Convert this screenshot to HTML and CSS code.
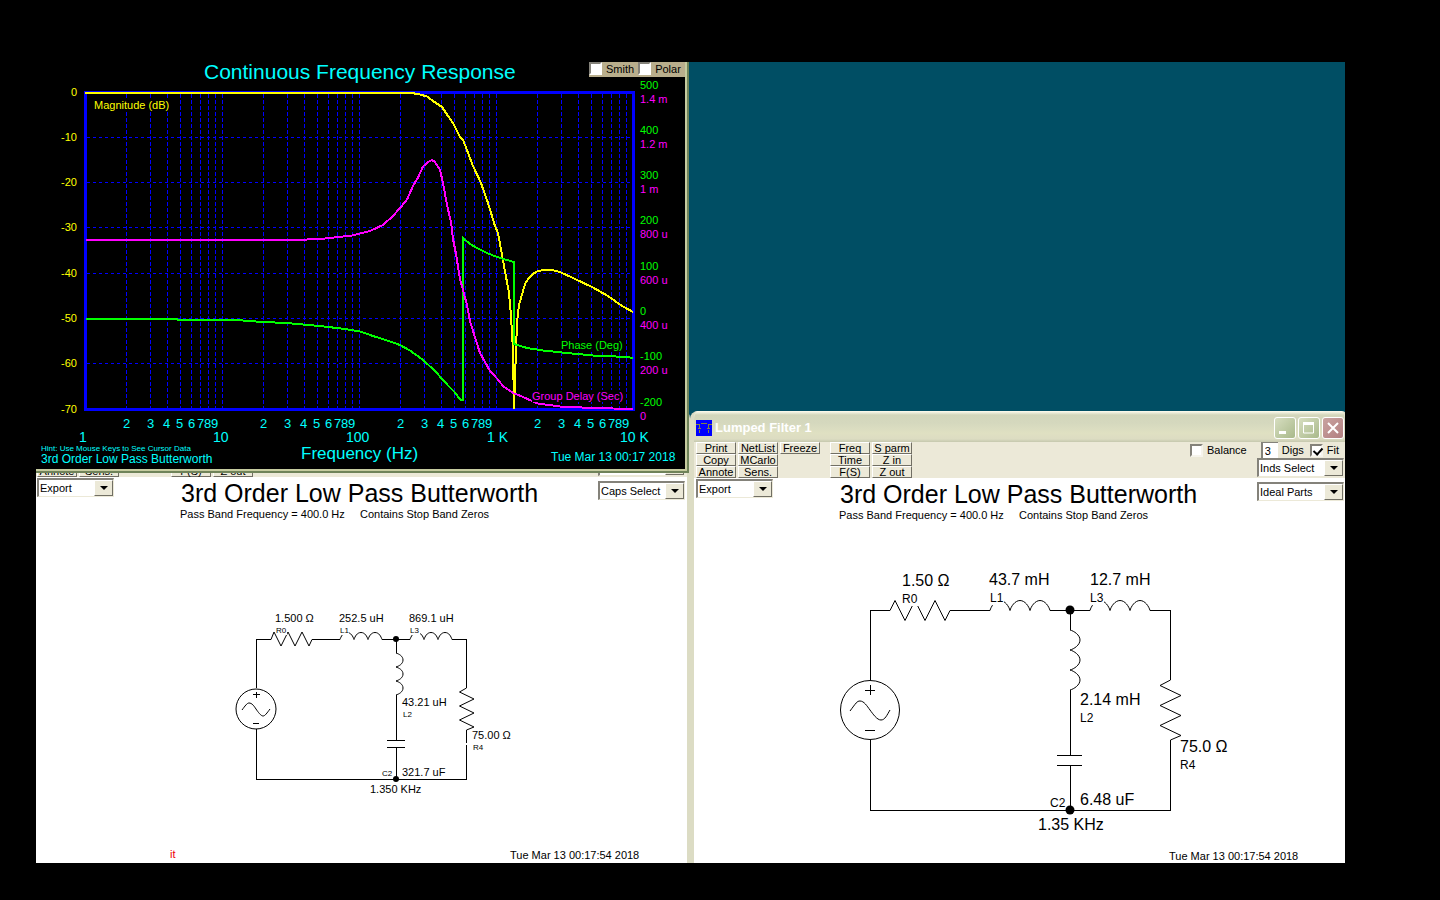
FILE: index.html
```
<!DOCTYPE html>
<html lang="en">
<head>
<meta charset="utf-8">
<title>Lumped Filter 1</title>
<link rel="stylesheet" href="styles.css">
</head>
<body>
<main class="desktop">

  <section class="window window-left" aria-label="Lumped Filter">
    <header class="titlebar"></header>
    <div class="client">
      <div class="toolbar">
        <div class="button-grid">
          <button class="c1">Print</button><button class="c2">NetList</button><button class="c3">Freeze</button><button class="c4">Freq</button><button class="c5">S parm</button>
          <button class="c1">Copy</button><button class="c2">MCarlo</button><button class="c4">Time</button><button class="c5">Z in</button>
          <button class="c1">Annote</button><button class="c2">Sens.</button><button class="c4">F(S)</button><button class="c5">Z out</button>
        </div>
        <div class="combo combo-inds"><select aria-label="Inductors"><option>Inds Select</option></select></div>
      </div>
      <div class="sheet">
        <div class="combo combo-export"><select aria-label="Export"><option>Export</option></select></div>
        <div class="combo combo-parts"><select aria-label="Capacitors"><option>Caps Select</option></select></div>
        <svg class="schematic" viewBox="35 477 652 387">
          <text class="t25" x="181" y="502">3rd Order Low Pass Butterworth</text>
          <text class="t11" x="180" y="518">Pass Band Frequency = 400.0 Hz</text>
          <text class="t11" x="360" y="518">Contains Stop Band Zeros</text>
          <g class="wire crisp">
            <path d="M256.5 688V639.5H271M312 639.5H340M382 639.5H410M452 639.5H466.5V688M466.5 730V743M466.5 745V779.5H256.5V729M396.5 639V653M396.5 695V740M387 740.5H405M387 747.5H405M396.5 748V779M253 694.5H260M256.5 692V698M253 723.5H259"/>
          </g>
          <g class="wire">
            <path d="M271 639.5L274 632L281 646L288 632L295 646L302 632L309 646L312 639.5M466.5 688L459.5 692L474 699L459.5 706L474 713L459.5 720L474 727L466.5 730"/>
            <path d="M340 639.5c1-3 3-7 7-7s6 4 7 7c1-3 3-7 7-7s6 4 7 7c1-3 3-7 7-7s6 4 7 7M410 639.5c1-3 3-7 7-7s6 4 7 7c1-3 3-7 7-7s6 4 7 7c1-3 3-7 7-7s6 4 7 7M396 653c3 1 7 3 7 7s-4 6-7 7c3 1 7 3 7 7s-4 6-7 7c3 1 7 3 7 7s-4 6-7 7"/>
            <circle cx="256" cy="709" r="20"/>
            <path d="M242 710C245 706 247 703 249 703C252 703 254 706 256 709S261 716 263 716S267 713 270 709"/>
          </g>
          <circle cx="396" cy="639" r="3"/><circle cx="396" cy="779" r="3"/>
          <rect class="paper" x="277" y="626" width="10" height="9"/><rect class="paper" x="341" y="626" width="8" height="9"/><rect class="paper" x="411" y="626" width="9" height="9"/>
          <text class="t11" x="275" y="622">1.500 Ω</text><text class="t8" x="276" y="633">R0</text>
          <text class="t11" x="339" y="622">252.5 uH</text><text class="t8" x="340" y="633">L1</text>
          <text class="t11" x="409" y="622">869.1 uH</text><text class="t8" x="410" y="633">L3</text>
          <text class="t11" x="402" y="706">43.21 uH</text><text class="t8" x="403" y="717">L2</text>
          <text class="t11" x="472" y="739">75.00 Ω</text><text class="t8" x="473" y="750">R4</text>
          <text class="t8" x="382" y="776">C2</text><text class="t11" x="402" y="776">321.7 uF</text>
          <text class="t11" x="370" y="793">1.350 KHz</text>
          <text class="t11 red" x="170" y="858">it</text>
          <text class="t11" x="510" y="859">Tue Mar 13 00:17:54 2018</text>
        </svg>
      </div>
    </div>
  </section>

  <section class="window window-right" aria-label="Lumped Filter 1">
    <header class="titlebar">
      <svg class="app-icon" viewBox="0 0 16 16"><rect width="16" height="16" fill="#0000ff"/><path d="M0 4.5H4M5 3.500H11M12 4.500H16M3.500 5V8M12.500 5V8M3.500 10V13M12.500 10V13M2 8.500H5M11 8.500H14" fill="none" stroke="#85853e" shape-rendering="crispEdges"/></svg>
      <h1>Lumped Filter 1</h1>
      <button class="caption-button" aria-label="Minimize"><svg viewBox="0 0 20 20"><path d="M4 14.500H11" stroke="#fff" stroke-width="3"/></svg></button>
      <button class="caption-button" aria-label="Maximize"><svg viewBox="0 0 20 20"><path d="M4.500 5.500H14.500V15H4.500Z" fill="none" stroke="#fff"/><path d="M4 5.500H15" stroke="#fff" stroke-width="3"/></svg></button>
      <button class="caption-button close" aria-label="Close"><svg viewBox="0 0 20 20"><path d="M5 5L15 15M15 5L5 15" stroke="#fff" stroke-width="2"/></svg></button>
    </header>
    <div class="client">
      <div class="toolbar">
        <div class="button-grid">
          <button class="c1">Print</button><button class="c2">NetList</button><button class="c3">Freeze</button><button class="c4">Freq</button><button class="c5">S parm</button>
          <button class="c1">Copy</button><button class="c2">MCarlo</button><button class="c4">Time</button><button class="c5">Z in</button>
          <button class="c1">Annote</button><button class="c2">Sens.</button><button class="c4">F(S)</button><button class="c5">Z out</button>
        </div>
        <div class="options">
          <label class="balance"><input type="checkbox"> Balance</label>
          <label class="digits"><input type="text" value="3"> Digs</label>
          <label><input type="checkbox" checked> Fit</label>
        </div>
        <div class="combo combo-inds"><select aria-label="Inductors"><option>Inds Select</option></select></div>
      </div>
      <div class="sheet">
        <div class="combo combo-export"><select aria-label="Export"><option>Export</option></select></div>
        <div class="combo combo-parts"><select aria-label="Parts"><option>Ideal Parts</option></select></div>
        <svg class="schematic" viewBox="694 478 651 387">
          <text class="t25" x="840" y="503">3rd Order Low Pass Butterworth</text>
          <text class="t11" x="839" y="519">Pass Band Frequency = 400.0 Hz</text>
          <text class="t11" x="1019" y="519">Contains Stop Band Zeros</text>
          <g class="wire crisp">
            <path d="M870.5 680V610.5H890M950 610.5H990M1050 610.5H1090M1150 610.5H1170.500V680M1170.500 740V810.5H870.5V740M1070.500 610V630M1070.500 690V755M1057 755.500H1082M1057 765.500H1082M1070.500 766V810M865 690.500H875M870.5 685V695M865 730.500H875"/>
          </g>
          <g class="wire">
            <path d="M890 610.5L895 600.5L905 620.5L915 600.5L925 620.5L935 600.5L945 620.5L950 610.5M1170.500 680L1160 685.500L1181 695.500L1160 705.500L1181 715.500L1160 725.500L1181 735.500L1170.500 740"/>
            <path d="M990 610.500c1-4 5-10 10-10s9 6 10 10c1-4 5-10 10-10s9 6 10 10c1-4 5-10 10-10s9 6 10 10M1090 610.500c1-4 5-10 10-10s9 6 10 10c1-4 5-10 10-10s9 6 10 10c1-4 5-10 10-10s9 6 10 10M1070 630c4 1 10 5 10 10s-6 9-10 10c4 1 10 5 10 10s-6 9-10 10c4 1 10 5 10 10s-6 9-10 10"/>
            <circle cx="870" cy="710" r="29.500"/>
            <path d="M850 711C856 703 857 701 860 701C864 701 867 706 870 710S877 720 881 720S887 715 890 710"/>
          </g>
          <circle cx="1070" cy="610" r="4.500"/><circle cx="1070" cy="810" r="4.500"/>
          <rect class="paper" x="902" y="593" width="16" height="13"/><rect class="paper" x="992" y="592" width="12" height="13"/><rect class="paper" x="1092" y="592" width="12" height="13"/>
          <text class="t16" x="902" y="586">1.50 Ω</text><text class="t12" x="902" y="603">R0</text>
          <text class="t16" x="989" y="585">43.7 mH</text><text class="t12" x="990" y="602">L1</text>
          <text class="t16" x="1090" y="585">12.7 mH</text><text class="t12" x="1090" y="602">L3</text>
          <text class="t16" x="1080" y="705">2.14 mH</text><text class="t12" x="1080" y="722">L2</text>
          <text class="t16" x="1180" y="752">75.0 Ω</text><text class="t12" x="1180" y="769">R4</text>
          <text class="t12" x="1050" y="807">C2</text><text class="t16" x="1080" y="805">6.48 uF</text>
          <text class="t16" x="1038" y="830">1.35 KHz</text>
          <text class="t11" x="1169" y="860">Tue Mar 13 00:17:54 2018</text>
        </svg>
      </div>
    </div>
  </section>

  <section class="chart-window" aria-label="Continuous Frequency Response">
    <div class="chart-options">
      <label><input type="checkbox"> Smith</label>
      <label><input type="checkbox"> Polar</label>
    </div>
    <svg class="chart" viewBox="36 62 649 407">
      <text class="t21 cyan" x="204" y="79">Continuous Frequency Response</text>
      <path class="grid grid-x" d="M126.500 94V408M150.500 94V408M167.500 94V408M180.500 94V408M191.500 94V408M200.500 94V408M208.500 94V408M215.500 94V408M222.500 94V408M263.500 94V408M287.500 94V408M304.500 94V408M317.500 94V408M328.500 94V408M337.500 94V408M345.500 94V408M352.500 94V408M359.500 94V408M400.500 94V408M424.500 94V408M441.500 94V408M454.500 94V408M465.500 94V408M474.500 94V408M482.500 94V408M489.500 94V408M496.500 94V408M537.500 94V408M561.500 94V408M578.500 94V408M591.500 94V408M602.500 94V408M611.500 94V408M619.500 94V408M626.500 94V408"/>
      <path class="grid grid-y" d="M87 137.500H632M87 182.500H632M87 227.500H632M87 273.500H632M87 318.500H632M87 363.500H632"/>
      <rect class="frame" x="85.500" y="92.500" width="548" height="317"/>
      <path class="curve yellow-line" d="M85 93H411L418 94L427 96.500L433 101L442 107L448 116L453 123L460 137L463 140L467 150L473 166L481 183L488 203L495 226L498 233L504 266L509 293L511 316L513 350L514 409L516 350L517 323L519 305L523 291L525 284L528 279L533 274L537 271.500L543 270H552L560 272L573 278L593 287.500L607 295.500L623 306.500L633 312"/>
      <path class="curve green-line" d="M86 319H175L180 320H236L263 322L286 323L320 326L345 329L360 331.500L373 336L387 340.500L400 345L410 350.500L423 360L435 371L448 385.500L455 392.500L460 399.500L463 400V238L470 244L477 248L487 253L497 257L507 260L514 262V344L527 348L543 350.500L567 353L593 355.500L627 357L633 358"/>
      <path class="curve magenta-line" d="M86 240H294L321 239L334 237.500L352 235.500L370 231L383 225L393 216L400 208L407 199.500L413 186L418 177.500L423 166.500L428 162L432 160L435 162L440 170L443 183L447 205L451 222L453 239L456 254L460 279L463 290L467 305L470 321L475 337.500L480 353L485 362L490 371L497 378.500L503 386L513 393L522 396.500L532 401L538 403.500L560 406.500L593 408L633 409"/>
      <rect class="mask" x="92" y="99" width="76" height="13"/><rect class="mask" x="561" y="339" width="63" height="12"/><rect class="mask" x="532" y="390" width="92" height="12"/>
      <text class="t11 yellow" x="94" y="109">Magnitude (dB)</text>
      <text class="t11 green" x="561" y="349">Phase (Deg)</text>
      <text class="t11 magenta" x="532" y="400">Group Delay (Sec)</text>
      <g class="t11 yellow end"><text x="77" y="96">0</text><text x="77" y="141">-10</text><text x="77" y="186">-20</text><text x="77" y="231">-30</text><text x="77" y="277">-40</text><text x="77" y="322">-50</text><text x="77" y="367">-60</text><text x="77" y="413">-70</text></g>
      <g class="t11 green"><text x="640" y="89">500</text><text x="640" y="134">400</text><text x="640" y="179">300</text><text x="640" y="224">200</text><text x="640" y="270">100</text><text x="640" y="315">0</text><text x="640" y="360">-100</text><text x="640" y="406">-200</text></g>
      <g class="t11 magenta"><text x="640" y="103">1.4 m</text><text x="640" y="148">1.2 m</text><text x="640" y="193">1 m</text><text x="640" y="238">800 u</text><text x="640" y="284">600 u</text><text x="640" y="329">400 u</text><text x="640" y="374">200 u</text><text x="640" y="420">0</text></g>
      <g class="t13 cyan">
        <text x="123" y="428">2</text><text x="147" y="428">3</text><text x="163" y="428">4</text><text x="176" y="428">5</text><text x="188" y="428">6</text><text x="197" y="428">7</text><text x="204" y="428">8</text><text x="211" y="428">9</text>
        <text x="260" y="428">2</text><text x="284" y="428">3</text><text x="300" y="428">4</text><text x="313" y="428">5</text><text x="325" y="428">6</text><text x="334" y="428">7</text><text x="341" y="428">8</text><text x="348" y="428">9</text>
        <text x="397" y="428">2</text><text x="421" y="428">3</text><text x="437" y="428">4</text><text x="450" y="428">5</text><text x="462" y="428">6</text><text x="471" y="428">7</text><text x="478" y="428">8</text><text x="485" y="428">9</text>
        <text x="534" y="428">2</text><text x="558" y="428">3</text><text x="574" y="428">4</text><text x="587" y="428">5</text><text x="599" y="428">6</text><text x="608" y="428">7</text><text x="615" y="428">8</text><text x="622" y="428">9</text>
      </g>
      <g class="t14 cyan"><text x="79" y="442">1</text><text x="213" y="442">10</text><text x="346" y="442">100</text><text x="487" y="442">1 K</text><text x="620" y="442">10 K</text></g>
      <text class="t8 cyan" x="41" y="451">Hint: Use Mouse Keys to See Cursor Data</text>
      <text class="t12 cyan" x="41" y="463">3rd Order Low Pass Butterworth</text>
      <text class="t17 cyan" x="301" y="459">Frequency (Hz)</text>
      <text class="t12 cyan" x="551" y="461">Tue Mar 13 00:17 2018</text>
    </svg>
  </section>
</main>
</body>
</html>
```
FILE: styles.css
```
* { box-sizing: border-box; }
body {
  margin: 0;
  min-height: 100vh;
  padding: 62px 95px 37px 36px;
  display: flex;
  background: #000;
  font: 11px/12px "Liberation Sans", Arial, sans-serif;
  color: #000;
}
.desktop {
  flex: 1;
  position: relative;
  overflow: hidden;
  background: #004e64;
}
button, input, select { font: inherit; color: inherit; margin: 0; }
svg { display: block; }

/* Windows on the desktop */
.window {
  position: absolute;
  bottom: -4px;
  border: solid #dcdcc4;
  border-width: 0 4px;
  border-radius: 8px 8px 0 0;
  background: #fff;
  overflow: hidden;
}
.window-left { top: 348px; left: -5px; right: 655px; border-right-width: 3px; }
.window-right { top: 349px; left: 654px; right: -4px; }

.titlebar {
  height: 31px;
  margin: 0 -4px;
  padding: 6px 5px 3px 6px;
  display: flex;
  align-items: center;
  background: linear-gradient(#fffdf0, #d3d6bb 4px, #d5d8be 12px, #dfe0c2 22px, #dcdcc2 28px, #c5c8ae);
}
.titlebar h1 {
  flex: 1;
  margin: 0 0 0 3px;
  font: bold 13px/16px "Liberation Sans", Arial, sans-serif;
  color: #fff;
}
.app-icon { width: 16px; height: 16px; }
.caption-button {
  width: 22px;
  height: 22px;
  margin-left: 2px;
  padding: 0;
  border: 1px solid #fff;
  border-radius: 3px;
  background: linear-gradient(135deg, #d7dec0, #a9b98b);
}
.caption-button.close { background: linear-gradient(135deg, #c9a3a0, #b27f80); }

.toolbar {
  position: relative;
  z-index: 1;
  height: 36px;
  padding: 0 1px 0 2px;
  background: #ece9d8;
}
.button-grid {
  display: grid;
  grid-template-columns: 40px 40px 48px 40px 40px;
  grid-template-rows: repeat(3, 12px);
  column-gap: 2px;
  width: max-content;
}
.button-grid button {
  width: 40px;
  height: 12px;
  padding: 0 1px;
  border: 1px solid;
  border-color: #fff #716f64 #716f64 #fff;
  background: #ece9d8;
  font-size: 11px;
  line-height: 10px;
  white-space: nowrap;
}
.c1 { grid-column: 1; }
.c2 { grid-column: 2; }
.c3 { grid-column: 3; }
.c4 { grid-column: 4; }
.c5 { grid-column: 5; }

.options {
  position: absolute;
  top: 0;
  right: 6px;
  display: flex;
  align-items: center;
  gap: 6px;
  height: 16px;
}
.options label, .chart-options label { display: flex; align-items: center; gap: 4px; }
.options .balance { margin-right: 8px; }
.digits input {
  width: 17px;
  height: 16px;
  padding: 1px 0 0 2px;
  border: solid #84827a;
  border-width: 1px 0 0 2px;
  background: #fff;
}
input[type="checkbox"] {
  appearance: none;
  width: 13px;
  height: 13px;
  border: 2px solid;
  border-color: #84827a #f6f4ec #f6f4ec #84827a;
  background: #fff;
}
input[type="checkbox"]:checked::before {
  content: "";
  display: block;
  width: 4px;
  height: 7px;
  margin: 0 0 0 3px;
  border: solid #000;
  border-width: 0 2px 2px 0;
  transform: rotate(42deg);
}

.combo {
  position: absolute;
  right: 1px;
  width: 87px;
  height: 19px;
}
.window-left .combo { right: 2px; }
.combo select {
  appearance: none;
  width: 100%;
  height: 100%;
  padding: 0 18px 0 1px;
  border: 1px solid;
  border-width: 2px 1px 1px 2px;
  border-color: #84827a #ece9d8 #ece9d8 #84827a;
  border-radius: 0;
  background: #fff;
}
.combo::after {
  content: "";
  position: absolute;
  top: 2px;
  right: 1px;
  bottom: 1px;
  width: 17px;
  border: 1px solid;
  border-color: #fff #716f64 #716f64 #fff;
  background: #ece9d8;
  pointer-events: none;
}
.combo::before {
  content: "";
  position: absolute;
  z-index: 1;
  top: 8px;
  right: 6px;
  border: solid transparent;
  border-width: 4px 4px 0;
  border-top-color: #000;
  pointer-events: none;
}
.combo-inds { top: 16px; }
.sheet { position: relative; }
.combo-export { left: 2px; top: 1px; width: 77px; }
.combo-parts { top: 4px; }
.schematic { width: 100%; }
.wire { fill: none; stroke: #000; stroke-width: 1; }
.crisp { shape-rendering: crispEdges; }
.paper { fill: #fff; }

/* Frequency response window */
.chart-window {
  position: absolute;
  z-index: 2;
  top: 0;
  left: 0;
  right: 656px;
  padding: 0 2px 2px 0;
  background: #000;
  border: solid #6f8359;
  border-width: 0 2px 2px 0;
  box-shadow: inset -2px -2px #c6cb9f;
}
.chart { width: 100%; }
.chart-options {
  position: absolute;
  top: 0;
  right: 2px;
  display: flex;
  gap: 4px;
  width: 96px;
  height: 15px;
  background: #b9ae8c;
}
.chart-options label { height: 13px; }
.chart-options input { border-color: #84827a #fff #fff #84827a; }
.grid { fill: none; stroke: #00f; shape-rendering: crispEdges; }
.grid-x { stroke-dasharray: 4 2; }
.grid-y { stroke-dasharray: 3 3; }
.frame { fill: none; stroke: #00f; stroke-width: 3; shape-rendering: crispEdges; }
.curve { fill: none; stroke-width: 2; shape-rendering: crispEdges; }
.mask { fill: #000; }
.yellow-line { stroke: #ff0; }
.green-line { stroke: #0f0; }
.magenta-line { stroke: #f0f; }

.yellow { fill: #ff0; }
.green { fill: #0f0; }
.magenta { fill: #f0f; }
.cyan { fill: #0ff; }
.red { fill: #e00; }
.end { text-anchor: end; }
.t8 { font-size: 8px; }
.t11 { font-size: 11px; }
.t12 { font-size: 12px; }
.t13 { font-size: 13px; }
.t14 { font-size: 14px; }
.t16 { font-size: 16px; }
.t17 { font-size: 17px; }
.t21 { font-size: 21px; }
.t25 { font-size: 25px; }
```
